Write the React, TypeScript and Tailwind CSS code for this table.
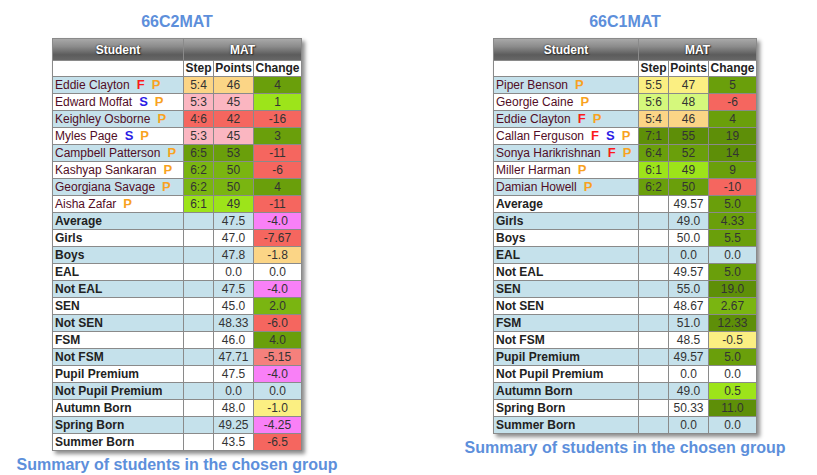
const C = {
  dk: 'bg-[#6a9f0b]',
  dker: 'bg-[#5e8f08]',
  gr: 'bg-[#7ab511]',
  br: 'bg-[#9de41a]',
  lg: 'bg-[#d5f87c]',
  pe: 'bg-[#fbd586]',
  ye: 'bg-[#fbef82]',
  pk: 'bg-[#fbb6c1]',
  rd: 'bg-[#f5665f]',
  lr: 'bg-[#f5807c]',
  mg: 'bg-[#f980f7]',
};

type Student = { name: string; flags: string; step: [string, string]; points: [string, string]; change: [string, string] };
type Summary = { label: string; points: string; change: [string, string | null] };

const groupA: { title: string; startBlue: boolean; students: Student[]; summary: Summary[]; studentW: string } = {
  title: '66C2MAT',
  startBlue: true,
  studentW: 'grid-cols-[130px_29px_39px_47px]',
  students: [
    { name: 'Eddie Clayton', flags: 'FP', step: ['5:4', C.pe], points: ['46', C.pe], change: ['4', C.dk] },
    { name: 'Edward Moffat', flags: 'SP', step: ['5:3', C.pk], points: ['45', C.pk], change: ['1', C.br] },
    { name: 'Keighley Osborne', flags: 'P', step: ['4:6', C.rd], points: ['42', C.rd], change: ['-16', C.rd] },
    { name: 'Myles Page', flags: 'SP', step: ['5:3', C.pk], points: ['45', C.pk], change: ['3', C.dk] },
    { name: 'Campbell Patterson', flags: 'P', step: ['6:5', C.dk], points: ['53', C.dk], change: ['-11', C.rd] },
    { name: 'Kashyap Sankaran', flags: 'P', step: ['6:2', C.gr], points: ['50', C.gr], change: ['-6', C.rd] },
    { name: 'Georgiana Savage', flags: 'P', step: ['6:2', C.gr], points: ['50', C.gr], change: ['4', C.dk] },
    { name: 'Aisha Zafar', flags: 'P', step: ['6:1', C.br], points: ['49', C.br], change: ['-11', C.rd] },
  ],
  summary: [
    { label: 'Average', points: '47.5', change: ['-4.0', C.mg] },
    { label: 'Girls', points: '47.0', change: ['-7.67', C.rd] },
    { label: 'Boys', points: '47.8', change: ['-1.8', C.pe] },
    { label: 'EAL', points: '0.0', change: ['0.0', null] },
    { label: 'Not EAL', points: '47.5', change: ['-4.0', C.mg] },
    { label: 'SEN', points: '45.0', change: ['2.0', C.gr] },
    { label: 'Not SEN', points: '48.33', change: ['-6.0', C.rd] },
    { label: 'FSM', points: '46.0', change: ['4.0', C.dk] },
    { label: 'Not FSM', points: '47.71', change: ['-5.15', C.lr] },
    { label: 'Pupil Premium', points: '47.5', change: ['-4.0', C.mg] },
    { label: 'Not Pupil Premium', points: '0.0', change: ['0.0', null] },
    { label: 'Autumn Born', points: '48.0', change: ['-1.0', C.ye] },
    { label: 'Spring Born', points: '49.25', change: ['-4.25', C.mg] },
    { label: 'Summer Born', points: '43.5', change: ['-6.5', C.rd] },
  ],
};

const groupB: typeof groupA = {
  title: '66C1MAT',
  startBlue: true,
  studentW: 'grid-cols-[144px_29px_39px_47px]',
  students: [
    { name: 'Piper Benson', flags: 'P', step: ['5:5', C.ye], points: ['47', C.ye], change: ['5', C.dk] },
    { name: 'Georgie Caine', flags: 'P', step: ['5:6', C.lg], points: ['48', C.lg], change: ['-6', C.rd] },
    { name: 'Eddie Clayton', flags: 'FP', step: ['5:4', C.pe], points: ['46', C.pe], change: ['4', C.dk] },
    { name: 'Callan Ferguson', flags: 'FSP', step: ['7:1', C.dker], points: ['55', C.dker], change: ['19', C.dker] },
    { name: 'Sonya Harikrishnan', flags: 'FP', step: ['6:4', C.dk], points: ['52', C.dk], change: ['14', C.dker] },
    { name: 'Miller Harman', flags: 'P', step: ['6:1', C.br], points: ['49', C.br], change: ['9', C.dk] },
    { name: 'Damian Howell', flags: 'P', step: ['6:2', C.dk], points: ['50', C.dk], change: ['-10', C.rd] },
  ],
  summary: [
    { label: 'Average', points: '49.57', change: ['5.0', C.dk] },
    { label: 'Girls', points: '49.0', change: ['4.33', C.dk] },
    { label: 'Boys', points: '50.0', change: ['5.5', C.dk] },
    { label: 'EAL', points: '0.0', change: ['0.0', null] },
    { label: 'Not EAL', points: '49.57', change: ['5.0', C.dk] },
    { label: 'SEN', points: '55.0', change: ['19.0', C.dker] },
    { label: 'Not SEN', points: '48.67', change: ['2.67', C.gr] },
    { label: 'FSM', points: '51.0', change: ['12.33', C.dker] },
    { label: 'Not FSM', points: '48.5', change: ['-0.5', C.ye] },
    { label: 'Pupil Premium', points: '49.57', change: ['5.0', C.dk] },
    { label: 'Not Pupil Premium', points: '0.0', change: ['0.0', null] },
    { label: 'Autumn Born', points: '49.0', change: ['0.5', C.br] },
    { label: 'Spring Born', points: '50.33', change: ['11.0', C.dker] },
    { label: 'Summer Born', points: '0.0', change: ['0.0', null] },
  ],
};

const flagColor: Record<string, string> = {
  F: 'text-[#fb1a1a]',
  S: 'text-[#2a1ce6]',
  P: 'text-[#f8a21f]',
};

const cell = 'h-[16px] text-center text-[12px] leading-[16px] text-[#333]';
const headCell =
  'h-[21px] flex items-center justify-center text-[12px] font-bold text-white bg-[linear-gradient(to_bottom,#a8a8a8,#8c8c8c_35%,#5c5c5c_75%,#676767)] [text-shadow:0_0_2px_#222,1px_1px_1px_#333]';

const GroupTable = ({ g }: { g: typeof groupA }) => {
  const rows = g.students.length;
  return (
    <div className="flex flex-col items-center">
      <div className="pt-[13px] mb-[7px] text-[16px] leading-[18px] font-bold text-[#5d8fdb]">{g.title}</div>
      <div className={`grid ${g.studentW} gap-px bg-[#8a8a8a] p-px shadow-[3px_3px_4px_rgba(0,0,0,0.45)]`}>
        <div className={headCell}>Student</div>
        <div className={`${headCell} col-span-3`}>MAT</div>

        <div className="h-[15px] bg-white" />
        <div className="h-[15px] bg-white text-center text-[12px] leading-[15px] font-bold text-[#222]">Step</div>
        <div className="h-[15px] bg-white text-center text-[12px] leading-[15px] font-bold text-[#222]">Points</div>
        <div className="h-[15px] bg-white text-center text-[12px] leading-[15px] font-bold text-[#222]">Change</div>

        {g.students.map((s, i) => {
          const rowBg = i % 2 === 0 ? 'bg-[#c5e1eb]' : 'bg-white';
          return [
            <div key={s.name + 'n'} className={`${rowBg} h-[16px] flex items-center pl-[2px] text-[12px] leading-[16px] text-[#520d25] whitespace-nowrap`}>
              {s.name}
              {s.flags.split('').map((f, k) => (
                <span key={k} className={`ml-[7px] font-bold text-[13px] ${flagColor[f]}`}>
                  {f}
                </span>
              ))}
            </div>,
            <div key={s.name + 's'} className={`${cell} ${s.step[1]}`}>{s.step[0]}</div>,
            <div key={s.name + 'p'} className={`${cell} ${s.points[1]}`}>{s.points[0]}</div>,
            <div key={s.name + 'c'} className={`${cell} ${s.change[1]}`}>{s.change[0]}</div>,
          ];
        })}

        {g.summary.map((r, i) => {
          const rowBg = (i + rows) % 2 === 0 ? 'bg-[#c5e1eb]' : 'bg-white';
          return [
            <div key={r.label + 'n'} className={`${rowBg} h-[16px] pl-[2px] text-[12px] leading-[16px] font-bold text-[#222] whitespace-nowrap`}>
              {r.label}
            </div>,
            <div key={r.label + 's'} className={`${rowBg} h-[16px]`} />,
            <div key={r.label + 'p'} className={`${cell} ${rowBg}`}>{r.points}</div>,
            <div key={r.label + 'c'} className={`${cell} ${r.change[1] ?? rowBg}`}>{r.change[0]}</div>,
          ];
        })}
      </div>
      <div className="mt-[5px] text-[16px] leading-[18px] font-bold text-[#5d8fdb] whitespace-nowrap">
        Summary of students in the chosen group
      </div>
    </div>
  );
};

export default function App() {
  return (
    <div className="w-[817px] h-[475px] bg-white font-['Liberation_Sans',Arial,sans-serif] flex items-start">
      <div className="w-[354px] flex justify-center">
        <GroupTable g={groupA} />
      </div>
      <div className="ml-[96px] w-[350px] flex justify-center">
        <GroupTable g={groupB} />
      </div>
    </div>
  );
}
